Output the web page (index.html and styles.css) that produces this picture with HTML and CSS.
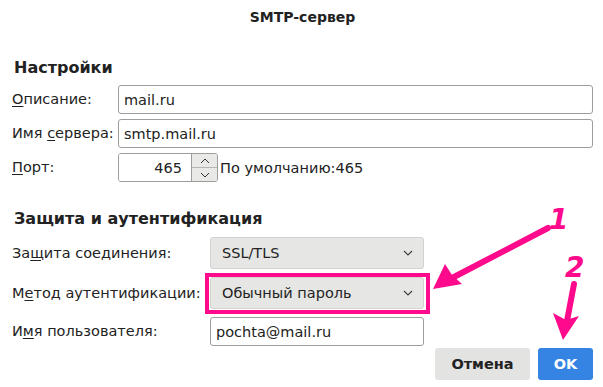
FILE: index.html
```html
<!DOCTYPE html>
<html lang="ru">
<head>
    <meta charset="UTF-8">
    <meta name="viewport" content="width=device-width, initial-scale=1.0">
    <title>SMTP-сервер</title>
    <link rel="stylesheet" href="styles.css">
</head>
<body>
    <div class="dialog">
        <div class="title">SMTP-сервер</div>

        <h2 class="section-title first">Настройки</h2>
        <div class="form settings">
            <label for="desc"><u>О</u>писание:</label>
            <input type="text" id="desc" class="field" value="mail.ru">

            <label for="server">Имя <u>с</u>ервера:</label>
            <input type="text" id="server" class="field" value="smtp.mail.ru">

            <label for="port"><u>П</u>орт:</label>
            <div class="port-row">
                <div class="spin">
                    <input type="text" id="port" class="spin-value" value="465">
                    <div class="spin-btns">
                        <span class="spin-btn">
                            <svg width="10" height="6" viewBox="0 0 10 6"><path d="M1 5 L5 1 L9 5" fill="none" stroke="#333" stroke-width="1"/></svg>
                        </span>
                        <span class="spin-btn">
                            <svg width="10" height="6" viewBox="0 0 10 6"><path d="M1 1 L5 5 L9 1" fill="none" stroke="#333" stroke-width="1"/></svg>
                        </span>
                    </div>
                </div>
                <span class="hint">По умолчанию:465</span>
            </div>
        </div>

        <h2 class="section-title">Защита и аутентификация</h2>
        <div class="form security">
            <label>За<u>щ</u>ита соединения:</label>
            <div class="select">
                <span>SSL/TLS</span>
                <svg width="10" height="6" viewBox="0 0 10 6"><path d="M1 1 L5 5 L9 1" fill="none" stroke="#444" stroke-width="1.2"/></svg>
            </div>

            <label>М<u>е</u>тод аутентификации:</label>
            <div class="select marked">
                <span>Обычный пароль</span>
                <svg width="10" height="6" viewBox="0 0 10 6"><path d="M1 1 L5 5 L9 1" fill="none" stroke="#444" stroke-width="1.2"/></svg>
            </div>

            <label for="user">И<u>м</u>я пользователя:</label>
            <input type="text" id="user" class="field" value="pochta@mail.ru">
        </div>

        <div class="buttons">
            <button class="btn">Отмена</button>
            <button class="btn btn-ok">OK</button>
        </div>

        <!-- пометки поверх скриншота -->
        <svg class="annotations" width="603" height="387" viewBox="0 0 603 387">
            <g stroke="#ff0a8c" stroke-width="6" stroke-linecap="round" fill="none">
                <path d="M548 228 L452 278"/>
                <path d="M574 284 L567 321"/>
            </g>
            <g fill="#ff0a8c">
                <path d="M433 289 L445 264 L452 275 L462 284 Z"/>
                <path d="M563 340 L553 313 L566 320 L579 316 Z"/>
                <text x="549" y="229" class="mark-num">1</text>
                <text x="565" y="277" class="mark-num">2</text>
            </g>
        </svg>
    </div>
</body>
</html>
```

FILE: styles.css
```css
* {
    margin: 0;
    padding: 0;
    box-sizing: border-box;
}

body {
    background: #fff;
    font-family: 'DejaVu Sans', 'Noto Sans', sans-serif;
    font-size: 14.5px;
    color: #222;
}

.dialog {
    position: relative;
    width: 603px;
    height: 387px;
    padding: 9px 10px 0 12px;
}

.title {
    text-align: center;
    font-size: 14px;
    font-weight: bold;
    line-height: 17px;
}

.section-title {
    font-size: 16px;
    font-weight: bold;
    line-height: 20px;
    margin: 27px 0 0 2px;
}

.section-title.first {
    margin-top: 32px;
}

.form {
    display: grid;
    align-items: center;
}

.settings {
    grid-template-columns: 106px 1fr;
    row-gap: 5px;
    margin-top: 7px;
}

.security {
    grid-template-columns: 198px 214px;
    row-gap: 8px;
    margin-top: 8px;
}

label {
    line-height: 17px;
}

u {
    text-decoration-thickness: 1px;
    text-underline-offset: 2px;
}

.field {
    height: 29px;
    width: 100%;
    border: 1px solid #9d9d9d;
    border-radius: 3px;
    padding: 0 5px;
    font: inherit;
    color: #222;
    background: #fff;
    outline: none;
}

.port-row {
    display: flex;
    align-items: center;
}

.spin {
    display: flex;
    width: 100px;
    height: 29px;
    border: 1px solid #9d9d9d;
    border-radius: 3px;
    overflow: hidden;
}

.spin-value {
    flex: 1;
    min-width: 0;
    border: none;
    text-align: right;
    padding-right: 9px;
    font: inherit;
    color: #222;
    outline: none;
}

.spin-btns {
    width: 26px;
    display: flex;
    flex-direction: column;
    border-left: 1px solid #9d9d9d;
}

.spin-btn {
    flex: 1;
    display: flex;
    align-items: center;
    justify-content: center;
    background: #e9e9e8;
}

.spin-btn + .spin-btn {
    border-top: 1px solid #b5b5b5;
}

.hint {
    margin-left: 2px;
}

.select {
    height: 32px;
    display: flex;
    align-items: center;
    justify-content: space-between;
    padding: 0 10px 0 11px;
    background: #e6e6e4;
    border: 1px solid #d2d2d0;
    border-radius: 3px;
}

.select.marked {
    position: relative;
}

.select.marked::after {
    content: '';
    position: absolute;
    top: -5px;
    left: -6px;
    right: -7px;
    bottom: -6px;
    border: 4px solid #ff0a8c;
}

.buttons {
    display: flex;
    justify-content: flex-end;
    gap: 8px;
    margin-top: 2px;
}

.btn {
    height: 32px;
    width: 95px;
    border: none;
    border-radius: 3px;
    background: #e3e3e1;
    font: inherit;
    font-weight: bold;
    color: #222;
}

.btn-ok {
    width: 55px;
    background: #3584e4;
    color: #fff;
}

.annotations {
    position: absolute;
    top: 0;
    left: 0;
    pointer-events: none;
}

.mark-num {
    font-family: 'DejaVu Sans', sans-serif;
    font-size: 28px;
    font-weight: bold;
    font-style: italic;
}
```
